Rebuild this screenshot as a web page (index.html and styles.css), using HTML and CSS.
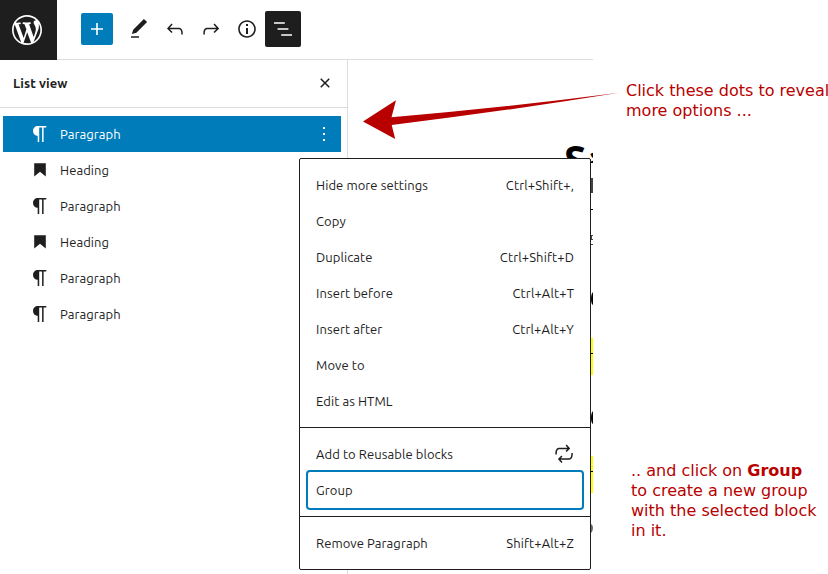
FILE: index.html
```
<!DOCTYPE html>
<html lang="en">
<head>
<meta charset="utf-8">
<title>List view</title>
<link rel="stylesheet" href="styles.css">
</head>
<body>
<div class="page">
  <div class="editor">
    <header class="topbar">
      <div class="logo"><svg viewBox="0 0 20 20" width="30" height="30"><path d="M20 10c0-5.51-4.49-10-10-10C4.48 0 0 4.49 0 10c0 5.52 4.48 10 10 10 5.51 0 10-4.48 10-10zM7.78 15.37L4.37 6.22c.55-.02 1.17-.08 1.17-.08.5-.06.44-1.13-.06-1.11 0 0-1.45.11-2.37.11-.18 0-.37 0-.58-.01C4.12 2.69 6.87 1.11 10 1.11c2.33 0 4.45.87 6.05 2.34-.68-.11-1.65.39-1.65 1.58 0 .74.45 1.36.9 2.1.35.61.55 1.36.55 2.46 0 1.49-1.4 5-1.4 5l-3.03-8.37c.54-.02.82-.17.82-.17.5-.05.44-1.25-.06-1.22 0 0-1.44.12-2.38.12-.87 0-2.33-.12-2.33-.12-.5-.03-.56 1.2-.06 1.22l.92.08 1.26 3.41zM17.41 10c.24-.64.74-1.87.43-4.25.7 1.29 1.05 2.71 1.05 4.25 0 3.29-1.73 6.24-4.4 7.78.97-2.59 1.94-5.2 2.92-7.78zM6.1 18.09C3.12 16.65 1.11 13.53 1.11 10c0-1.3.23-2.48.72-3.59C3.25 10.3 4.67 14.2 6.1 18.09zm4.03-6.63l2.58 6.98c-.86.29-1.76.45-2.71.45-.79 0-1.57-.11-2.29-.33.81-2.38 1.62-4.74 2.42-7.1z"/></svg></div>
      <div class="tools">
        <div class="add"><svg viewBox="0 0 24 24"><path d="M18 11.2h-5.2V6h-1.6v5.2H6v1.6h5.2V18h1.6v-5.2H18z"/></svg></div>
        <div class="tool"><svg viewBox="0 0 24 24"><path d="M20.1 5.1L16.9 2 6.2 12.7l-1.3 4.4 4.5-1.3L20.1 5.1zM4 20.8h8v-1.5H4v1.5z"/></svg></div>
        <div class="tool"><svg viewBox="0 0 24 24"><path d="M18.3 11.7c-.6-.6-1.4-.9-2.3-.9H6.7l2.9-3.3-1.1-1-4.5 5L8.5 16l1-1-2.7-2.7H16c.5 0 .9.2 1.3.5 1 1 1 3.4 1 4.5v.3h1.5v-.2c0-1.5 0-4.3-1.5-5.7z"/></svg></div>
        <div class="tool"><svg viewBox="0 0 24 24"><path d="M15.6 6.5l-1.1 1 2.9 3.3H8c-.9 0-1.7.3-2.3.9-1.4 1.5-1.4 4.2-1.4 5.6v.2h1.5v-.3c0-1.1 0-3.5 1-4.5.3-.3.7-.5 1.3-.5h9.2L14.5 15l1.1 1.1 4.6-4.6-4.6-5z"/></svg></div>
        <div class="tool"><svg viewBox="0 0 24 24"><path d="M12 3.2c-4.8 0-8.8 3.9-8.8 8.8 0 4.8 3.9 8.8 8.8 8.8 4.8 0 8.8-3.9 8.8-8.8 0-4.8-4-8.8-8.8-8.8zm0 16c-4 0-7.2-3.3-7.2-7.2C4.8 8 8 4.8 12 4.8s7.2 3.3 7.2 7.2c0 4-3.2 7.2-7.2 7.2zM11 17h2v-6h-2v6zm0-8h2V7h-2v2z"/></svg></div>
        <div class="tool pressed"><svg viewBox="0 0 24 24"><path d="M13.8 5.2H3v1.5h10.8V5.2zm-3.6 12v1.5H21v-1.5H10.2zm7.2-6H6.6v1.5h10.8v-1.5z"/></svg></div>
      </div>
    </header>
    <div class="body">
      <aside class="sidebar">
        <div class="side-head">
          <strong>List view</strong>
          <svg viewBox="0 0 24 24"><path d="M12 13.06l3.712 3.713 1.061-1.06L13.061 12l3.712-3.712-1.06-1.06L12 10.938 8.288 7.227l-1.061 1.06L10.939 12l-3.712 3.712 1.06 1.061L12 13.061z"/></svg>
        </div>
        <ul class="blocks">
          <li class="selected"><svg viewBox="0 0 24 24"><use href="#pilcrow"/></svg><span>Paragraph</span><svg class="dots" viewBox="0 0 24 24"><path d="M13 19h-2v-2h2v2zm0-6h-2v-2h2v2zm0-6h-2V5h2v2z"/></svg></li>
          <li><svg viewBox="0 0 24 24"><use href="#bookmark"/></svg><span>Heading</span></li>
          <li><svg viewBox="0 0 24 24"><use href="#pilcrow"/></svg><span>Paragraph</span></li>
          <li><svg viewBox="0 0 24 24"><use href="#bookmark"/></svg><span>Heading</span></li>
          <li><svg viewBox="0 0 24 24"><use href="#pilcrow"/></svg><span>Paragraph</span></li>
          <li><svg viewBox="0 0 24 24"><use href="#pilcrow"/></svg><span>Paragraph</span></li>
        </ul>
      </aside>
      <!-- The document behind the menu; only its right edge shows. -->
      <main class="canvas">
        <div class="doc-title">Sa</div>
        <svg class="edge" viewBox="0 0 2 400" width="2" height="400">
          <path fill="#444" d="M0 20h2v15H0z"/>
          <path d="M0 51h2v1H0z"/>
          <path fill="#444" d="M0 77h2v1H0zM0 77h1v5H0zM0 81h2v1H0zM0 86h2v1H0z"/>
          <path d="M2 134Q0 136 0 141T2 147z"/>
          <path fill="#ff0" d="M0 180h2v37H0z"/>
          <path d="M0 195h2v1H0z"/>
          <path d="M2 253Q0 255 0 260T2 266z"/>
          <path fill="#ff0" d="M0 298h2v37H0z"/>
          <path d="M0 313h2v1H0z"/>
          <path fill="#666" d="M0 366Q2 367 2 370T0 375z"/>
        </svg>
      </main>
    </div>
  </div>

  <div class="menu">
    <div class="group">
      <div class="item"><span>Hide more settings</span><kbd>Ctrl+Shift+,</kbd></div>
      <div class="item"><span>Copy</span></div>
      <div class="item"><span>Duplicate</span><kbd>Ctrl+Shift+D</kbd></div>
      <div class="item"><span>Insert before</span><kbd>Ctrl+Alt+T</kbd></div>
      <div class="item"><span>Insert after</span><kbd>Ctrl+Alt+Y</kbd></div>
      <div class="item"><span>Move to</span></div>
      <div class="item"><span>Edit as HTML</span></div>
    </div>
    <div class="group">
      <div class="item"><span>Add to Reusable blocks</span><svg viewBox="0 0 24 24"><path d="M7 7.200h8.200L13.500 9l1.100 1.100 3.600-3.600-3.500-4-1.100 1 1.900 2.300H7c-.9 0-1.700.3-2.300.9-1.400 1.500-1.400 4.200-1.400 5.600v.2h1.500v-.3c0-1.100 0-3.500 1-4.500.3-.3.7-.5 1.200-.5zm13.800 4V11h-1.500v.3c0 1.100 0 3.500-1 4.500-.3.3-.7.5-1.300.5H8.800l1.700-1.700-1.100-1.100L5.900 17l3.500 4 1.100-1-1.900-2.300H17c.9 0 1.700-.3 2.300-.9 1.500-1.400 1.500-4.200 1.500-5.600z"/></svg></div>
      <div class="item focused"><span>Group</span></div>
    </div>
    <div class="group">
      <div class="item"><span>Remove Paragraph</span><kbd>Shift+Alt+Z</kbd></div>
    </div>
  </div>

  <svg class="arrow" viewBox="363 90 258 50" width="258" height="50"><path d="M363 121.500L396 100.300 391.500 117.200Q510 107 619 92.800Q510 110.500 391.700 125L395.200 139z"/></svg>

  <div class="notes">
    <p class="note first">Click these dots to reveal<br>more options ...</p>
    <p class="note second">.. and click on <b>Group</b><br>to create a new group<br>with the selected block<br>in it.</p>
  </div>
</div>
<svg class="defs" width="0" height="0">
  <symbol id="pilcrow" viewBox="0 0 24 24"><path d="M18.300 4H9.900v-.1l-.9.2c-2.300.4-4 2.400-4 4.800s1.700 4.400 4 4.800l.7.1V20h1.500V5.500h2.900V20h1.500V5.500h2.700V4z"/></symbol>
  <symbol id="bookmark" viewBox="0 0 24 24"><path d="M6.200 5.200v13.400l5.800-4.800 5.800 4.800V5.200z"/></symbol>
</svg>
</body>
</html>
```
FILE: styles.css
```
* { box-sizing: border-box; }
body {
  margin: 0;
  background: #fff;
  color: #1e1e1e;
  font: 13px/20px "Ubuntu", "Noto Sans", sans-serif;
  letter-spacing: .08px;
  overflow: hidden;
}
svg { display: block; fill: currentColor; flex: none; width: 24px; height: 24px; }
.defs { position: absolute; width: 0; height: 0; }
.page { position: relative; width: 828px; height: 574px; display: flex; overflow: hidden; }
.editor { flex: none; width: 593px; height: 574px; display: flex; flex-direction: column; overflow: hidden; }

.topbar { height: 60px; flex: none; display: flex; border-bottom: 1px solid #ddd; }
.logo { width: 57px; height: 60px; background: #1e1e1e; color: #fff; display: flex; align-items: center; padding-left: 12px; }
.logo svg { width: 30px; height: 30px; }
.tools { display: flex; align-items: center; height: 58px; padding-left: 24px; }
.add { width: 32px; height: 32px; margin-right: 8px; padding: 4px; background: #007cba; color: #fff; border-radius: 2px; }
.tool { width: 36px; height: 36px; padding: 6px; }
.pressed { background: #1e1e1e; color: #fff; border-radius: 2px; }

.body { flex: 1; display: flex; }
.sidebar { flex: none; width: 348px; border-right: 1px solid #ddd; }
.side-head { height: 48px; border-bottom: 1px solid #ddd; display: flex; align-items: center; justify-content: space-between; padding: 0 10px 1px 13px; }
.side-head strong { font-size: 13px; }
.blocks { list-style: none; margin: 0; padding: 8px 6px 0 3px; }
.blocks li { height: 36px; display: flex; align-items: center; padding: 0 5px 0 25px; gap: 8px; }
.blocks .selected { background: #007cba; color: #fff; }
.dots { margin-left: auto; }

.canvas { flex: 1; display: flex; padding: 98px 0 0 216px; color: #000; }
.doc-title { flex: none; width: 29px; margin: -20px -2px 0 0; height: 25px; overflow: hidden; white-space: nowrap; font: bold 40px/42px "Noto Sans", sans-serif; letter-spacing: .4px; }
.edge { width: 2px; height: 400px; }

.menu { position: absolute; left: 299px; top: 158px; width: 292px; background: #fff; border: 1px solid #1e1e1e; border-radius: 2px; }
.group { padding: 8px; }
.group + .group { border-top: 1px solid #1e1e1e; }
.item { height: 36px; padding: 0 8px; display: flex; align-items: center; justify-content: space-between; white-space: nowrap; border-radius: 2px; }
.item svg { margin-right: -2px; }
.item kbd { font: inherit; letter-spacing: .12px; }
.focused { box-shadow: 0 0 0 2px #007cba; }

.arrow { position: absolute; left: 363px; top: 90px; width: 258px; height: 50px; color: #b80000; }
.notes { flex: none; padding: 81px 0 0 33px; color: #b80000; font: 16px/20px "DejaVu Sans", sans-serif; letter-spacing: 0; white-space: nowrap; }
.note { margin: 0; }
.second { margin-top: 340px; padding-left: 5px; }
```
